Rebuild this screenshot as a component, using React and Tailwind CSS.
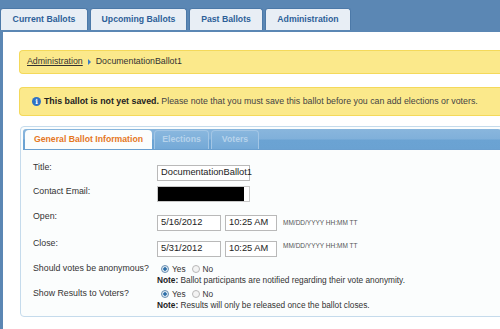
import React from 'react';

const font = { fontFamily: '"Liberation Sans", Arial, sans-serif' };

function TopTab({ label, w }) {
  return (
    <div
      className={`h-[22px] ${w} flex items-center justify-center rounded-t-[3px] bg-[#e8eef5] border border-b-0 border-[#4c79a8] text-[8.7px] font-bold text-[#2d5f98]`}
    >
      {label}
    </div>
  );
}

function Radio({ checked }) {
  return (
    <span
      className={`inline-block w-[8px] h-[8px] rounded-full border ${
        checked ? 'border-[#6a8fb0] bg-[radial-gradient(circle,#2c6ea8_35%,#dce8f2_45%)]' : 'border-[#b8b8b8] bg-[#f3f3f3]'
      }`}
    />
  );
}

function Field({ w, children, className = '' }) {
  return (
    <div className={`h-[16px] ${w} bg-white border border-[#b9b9b9] flex items-center px-[3px] text-[9.3px] text-[#222] ${className}`}>
      {children}
    </div>
  );
}

function DateTime({ date }) {
  return (
    <>
      <Field w="w-[64px]">{date}</Field>
      <Field w="w-[52px]">10:25 AM</Field>
      <span className="ml-[2px] text-[6.5px] text-[#555]">MM/DD/YYYY HH:MM TT</span>
    </>
  );
}

function YesNo({ note }) {
  return (
    <div className="h-[25px] flex flex-col text-[8.3px]">
      <div className="h-[15px] flex items-center gap-[3px] pl-[4px] pt-[3px]">
        <Radio checked />
        <span className="mr-[3px]">Yes</span>
        <Radio />
        <span>No</span>
      </div>
      <div className="leading-[10px]">
        <b className="text-[#222]">Note:</b> {note}
      </div>
    </div>
  );
}

export default function App() {
  return (
    <div className="w-[500px] h-[329px] bg-[#5b87b4] flex flex-col overflow-hidden" style={font}>
      {/* Top navigation */}
      <div className="h-[32px] pt-[8px] flex gap-[2px] border-b-2 border-[#5b87b4]">
        <TopTab label="Current Ballots" w="w-[88px]" />
        <TopTab label="Upcoming Ballots" w="w-[97px]" />
        <TopTab label="Past Ballots" w="w-[74px]" />
        <TopTab label="Administration" w="w-[86px]" />
      </div>

      <div className="flex-1 ml-[3px] bg-white pl-[16px] pt-[18px] flex flex-col">
        {/* Breadcrumb */}
        <div className="h-[24px] -mr-[4px] rounded-l-[4px] bg-[#fbe98b] border border-r-0 border-[#f4d95a] flex items-center pl-[7px] gap-[5px] text-[8.8px] text-[#333]">
          <span className="underline text-[#333]">Administration</span>
          <span className="w-0 h-0 border-y-[3px] border-y-transparent border-l-[3px] border-l-[#3a7cc6]" />
          <span>DocumentationBallot1</span>
        </div>

        {/* Info message */}
        <div className="mt-[13px] h-[29px] -mr-[4px] rounded-l-[4px] bg-[#fbe98b] border border-r-0 border-[#f4d95a] flex items-center pl-[12px] gap-[3px] text-[8.8px] text-[#444]">
          <span className="w-[9px] h-[9px] rounded-full bg-[#2f72c4] text-white text-[7px] font-bold flex items-center justify-center leading-none" style={{ fontFamily: '"DejaVu Serif", serif' }}>
            i
          </span>
          <span>
            <b className="text-[#222]">This ballot is not yet saved.</b> Please note that you must save this ballot before you can add elections or voters.
          </span>
        </div>

        {/* Panel */}
        <div className="mt-[10px] ml-[1px] h-[191px] -mr-[4px] rounded-[4px] border border-[#c5dbec] bg-[#fbfdfd] flex flex-col p-[2px]">
          <div className="h-[21px] rounded-t-[3px] bg-[linear-gradient(#89b6dd,#80b0da_50%,#6ba3d3_55%,#6aa2d2)] border-b border-[#6a9fcf] flex items-end gap-[2px] pl-[2px]">
            <div className="h-[19px] w-[127px] rounded-t-[4px] bg-[#fbfdfd] flex items-center justify-center text-[8.7px] font-bold text-[#e5771e]">
              General Ballot Information
            </div>
            <div className="h-[19px] w-[55px] rounded-t-[4px] bg-[linear-gradient(#89b7de,#74a9d7)] border border-b-0 border-[#a3c6e5] flex items-center justify-center text-[8.7px] font-bold text-[#b7d3eb]">
              Elections
            </div>
            <div className="h-[19px] w-[48px] rounded-t-[4px] bg-[linear-gradient(#89b7de,#74a9d7)] border border-b-0 border-[#a3c6e5] flex items-center justify-center text-[8.7px] font-bold text-[#b7d3eb]">
              Voters
            </div>
          </div>

          <div className="pl-[10px] pt-[11px] grid grid-cols-[124px_1fr] text-[8.8px] text-[#333] items-center">
            <div className="h-[22px]">Title:</div>
            <div className="h-[22px] flex items-start pt-[4px]">
              <Field w="w-[93px]">DocumentationBallot1</Field>
            </div>

            <div className="h-[26px] pt-[2px]">Contact Email:</div>
            <div className="h-[26px] flex items-start pt-[3px]">
              <div className="h-[16px] w-[93px] bg-white border border-[#c8c8c8] flex">
                <div className="w-[86px] h-full bg-black" />
              </div>
            </div>

            <div className="h-[27px] pt-[1px]">Open:</div>
            <div className="h-[27px] flex items-center gap-[4px]">
              <DateTime date="5/16/2012" />
            </div>

            <div className="h-[24px] pt-[1px]">Close:</div>
            <div className="h-[24px] flex items-start pt-[5px] gap-[4px]">
              <DateTime date="5/31/2012" />
            </div>

            <div className="h-[25px] self-start pt-[2px]">Should votes be anonymous?</div>
            <YesNo note="Ballot participants are notified regarding their vote anonymity." />

            <div className="h-[25px] self-start pt-[2px]">Show Results to Voters?</div>
            <YesNo note="Results will only be released once the ballot closes." />
          </div>
        </div>
      </div>
    </div>
  );
}
